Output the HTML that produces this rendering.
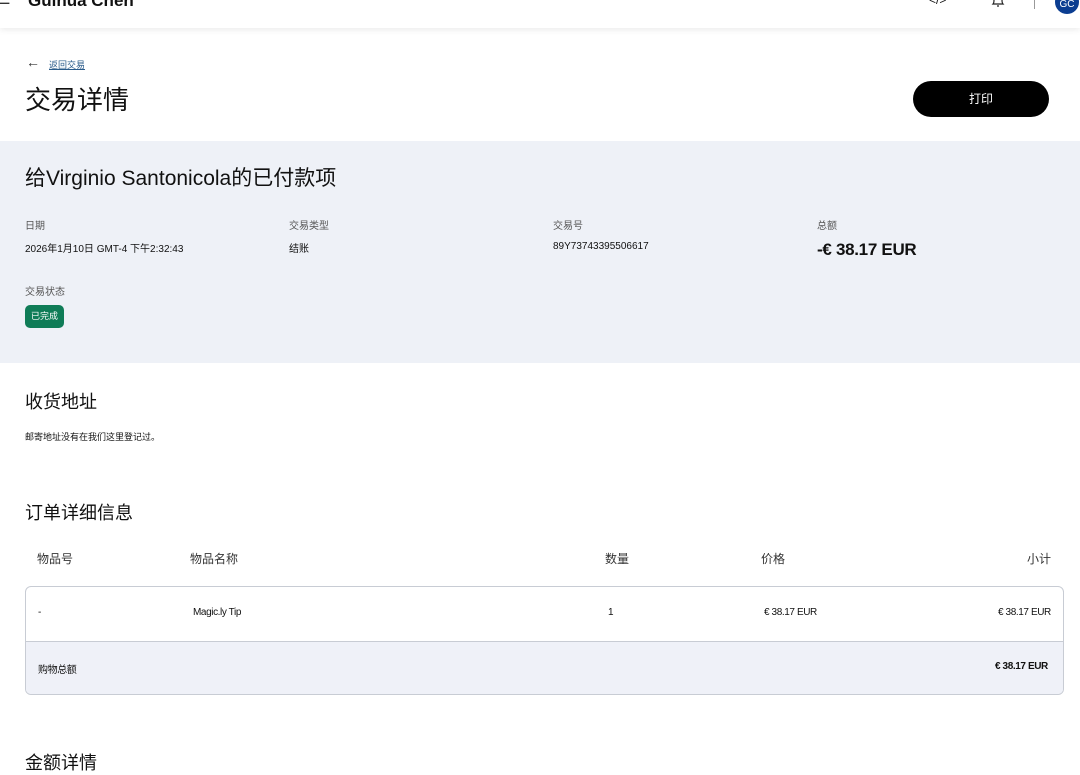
<!DOCTYPE html>
<html><head><meta charset="utf-8"><style>
*{margin:0;padding:0;box-sizing:border-box}
body{width:1080px;height:766px;overflow:hidden;background:#fff;font-family:"Liberation Sans","Noto Sans CJK SC",sans-serif;color:#111;position:relative}
.a{position:absolute;white-space:nowrap}
.hdr{position:absolute;left:0;top:0;width:1080px;height:28px;background:#fff;box-shadow:0 2px 6px rgba(0,0,0,.08)}
.gray{position:absolute;left:0;top:141px;width:1080px;height:222px;background:#eef1f7}
.lbl{font-size:10px;color:#555}
.val{font-size:10px;color:#111}
.h2{font-size:18px;color:#111}
.tbl{position:absolute;left:25px;top:586px;width:1039px;height:109px;border:1px solid #c8ccd4;border-radius:6px;overflow:hidden}
.foot{position:absolute;left:0;top:54px;width:100%;height:55px;background:#eff1f8;border-top:1px solid #c8ccd4}
.th{font-size:12px;color:#333}
.td{font-size:10px;color:#111;letter-spacing:-0.4px}
</style></head><body>
<div class="hdr"></div>
<div class="a" style="left:-2px;top:-9px;font-size:14px;color:#333">☰</div>
<div class="a" style="left:28px;top:-9px;font-size:17px;font-weight:bold">Guihua Chen</div>
<div class="a" style="left:929px;top:-7px;font-size:12px">&lt;/&gt;</div>
<svg class="a" style="left:990px;top:-6px" width="16" height="16" viewBox="0 0 16 16"><path d="M3 10 Q4 9 4 6 Q4 2 8 2 Q12 2 12 6 Q12 9 13 10 Z M7 12 h2" fill="none" stroke="#222" stroke-width="1.2"/></svg>
<div class="a" style="left:1034px;top:-5px;width:1px;height:14px;background:#999"></div>
<div class="a" style="left:1055px;top:-10px;width:24px;height:24px;border-radius:50%;background:#0b3d91;color:#fff;font-size:10px;text-align:center;line-height:30px">GC</div>

<div class="a" style="left:26px;top:54px;font-size:14px;color:#333">←</div>
<div class="a" style="left:49px;top:58px;font-size:9px;color:#2a5b8a;text-decoration:underline">返回交易</div>
<div class="a" style="left:25px;top:80px;font-size:26px;color:#111">交易详情</div>
<div class="a" style="left:913px;top:81px;width:136px;height:36px;border-radius:18px;background:#000;color:#fff;font-size:12px;text-align:center;line-height:36px">打印</div>

<div class="gray"></div>
<div class="a" style="left:25px;top:162px;font-size:21px">给Virginio Santonicola的已付款项</div>
<div class="a lbl" style="left:25px;top:217px">日期</div>
<div class="a val" style="left:25px;top:240px">2026年1月10日 GMT-4 下午2:32:43</div>
<div class="a lbl" style="left:289px;top:217px">交易类型</div>
<div class="a val" style="left:289px;top:240px">结账</div>
<div class="a lbl" style="left:553px;top:217px">交易号</div>
<div class="a val" style="left:553px;top:241px">89Y73743395506617</div>
<div class="a lbl" style="left:817px;top:217px">总额</div>
<div class="a" style="left:817px;top:240px;font-size:17px;font-weight:bold;letter-spacing:-0.3px">-€ 38.17 EUR</div>
<div class="a lbl" style="left:25px;top:283px">交易状态</div>
<div class="a" style="left:25px;top:305px;width:39px;height:23px;border-radius:5px;background:#0f7c57;color:#fff;font-size:9px;text-align:center;line-height:23px">已完成</div>

<div class="a h2" style="left:25px;top:388px">收货地址</div>
<div class="a val" style="left:25px;top:430px;font-size:9px">邮寄地址没有在我们这里登记过。</div>
<div class="a h2" style="left:25px;top:499px">订单详细信息</div>
<div class="a th" style="left:37px;top:550px">物品号</div>
<div class="a th" style="left:190px;top:550px">物品名称</div>
<div class="a th" style="left:605px;top:550px">数量</div>
<div class="a th" style="left:761px;top:550px">价格</div>
<div class="a th" style="left:1027px;top:550px">小计</div>
<div class="tbl"><div class="foot"></div></div>
<div class="a td" style="left:38px;top:607px">-</div>
<div class="a td" style="left:193px;top:607px">Magic.ly Tip</div>
<div class="a td" style="left:608px;top:607px">1</div>
<div class="a td" style="left:764px;top:607px">€ 38.17 EUR</div>
<div class="a td" style="left:998px;top:607px">€ 38.17 EUR</div>
<div class="a td" style="left:38px;top:661px">购物总额</div>
<div class="a td" style="left:995px;top:661px;font-weight:bold">€ 38.17 EUR</div>
<div class="a h2" style="left:25px;top:749px">金额详情</div>
</body></html>
